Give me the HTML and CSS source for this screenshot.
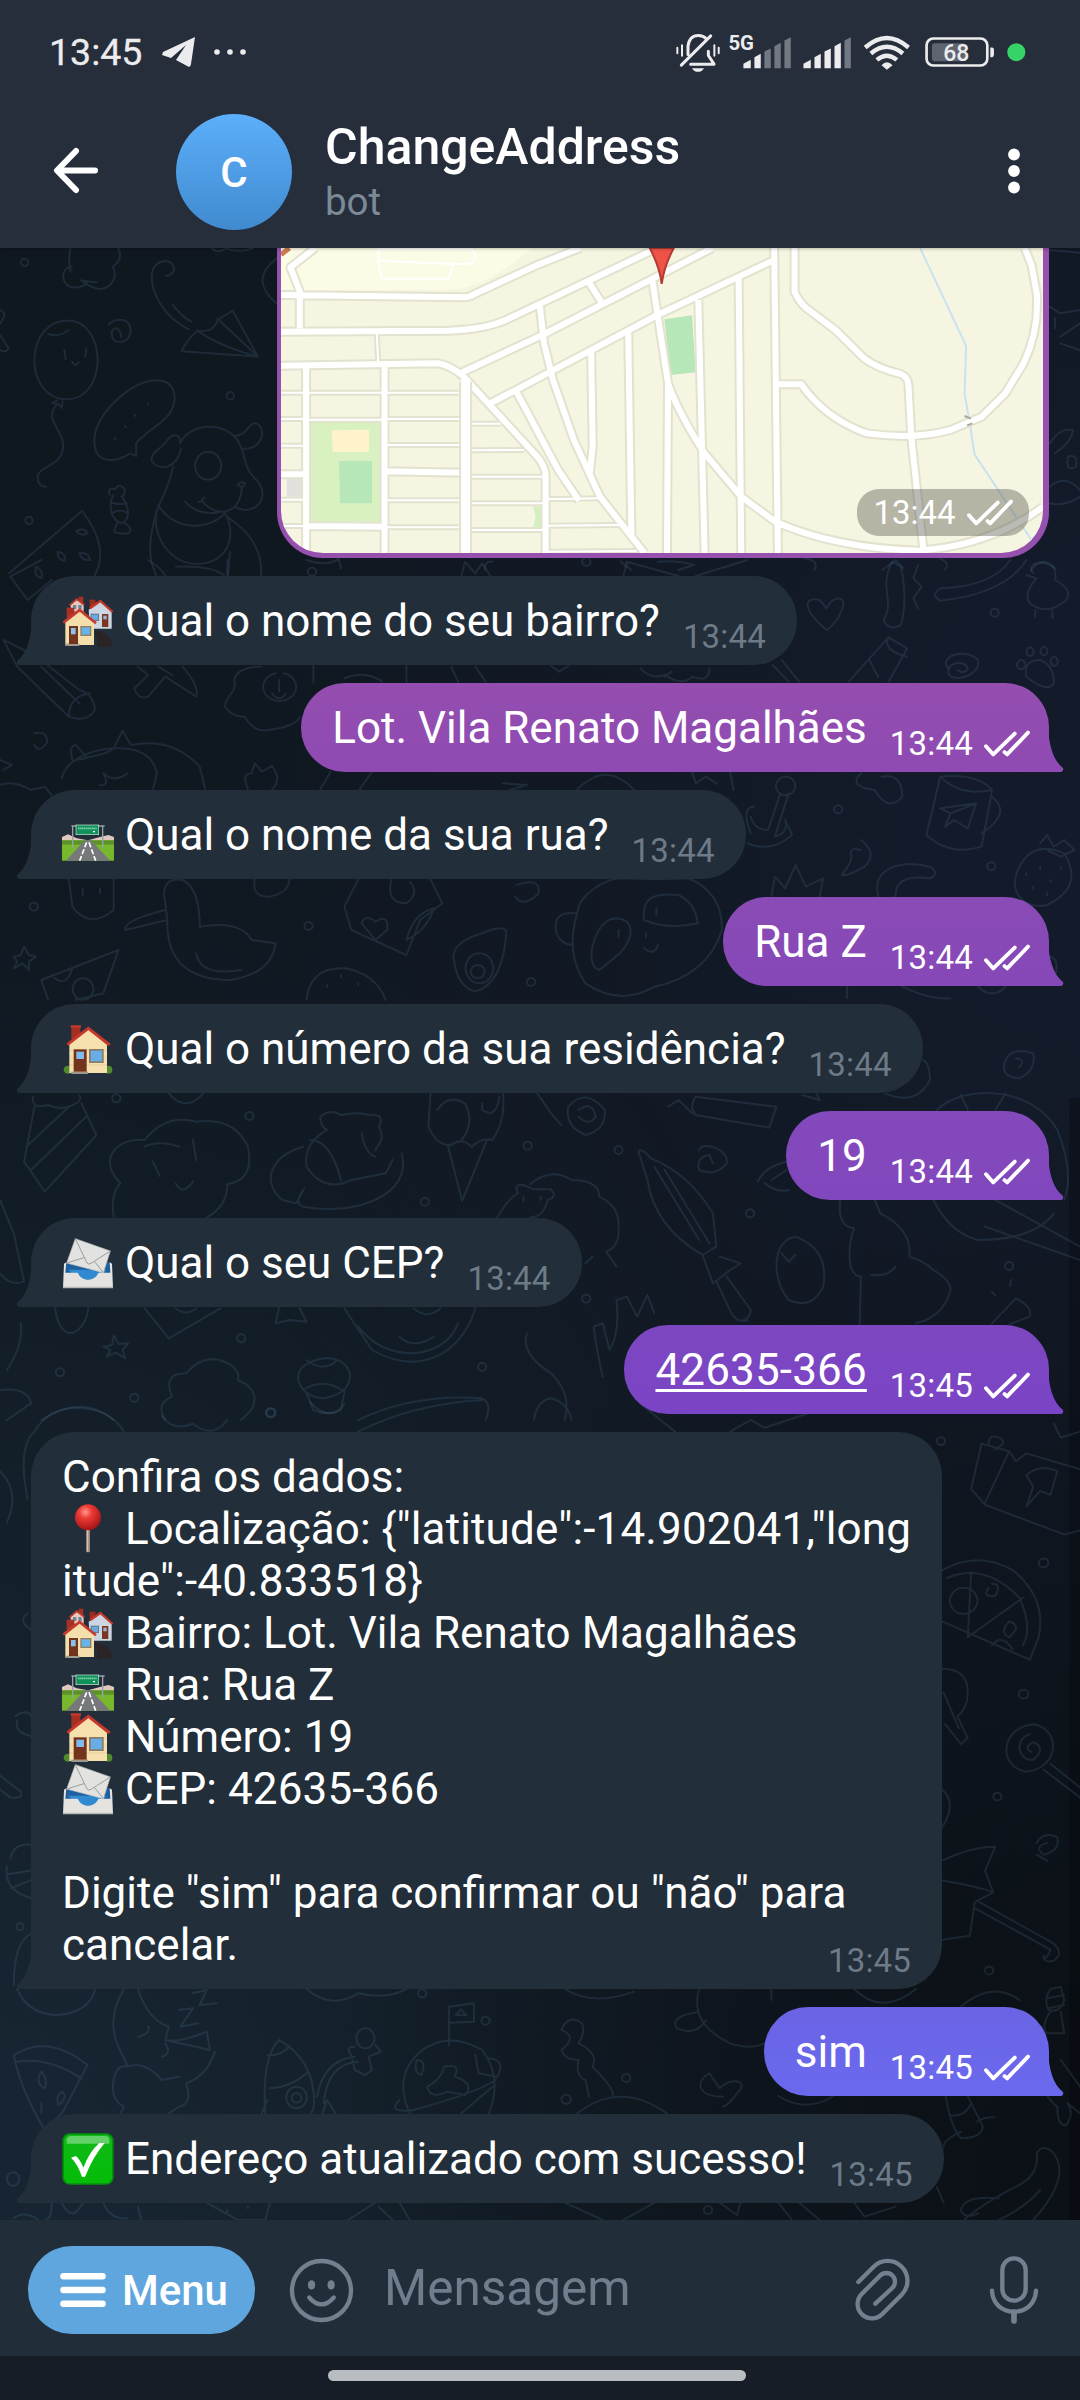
FILE: index.html
```html
<!DOCTYPE html>
<html lang="pt-BR">
<head>
<meta charset="utf-8">
<title>ChangeAddress</title>
<link rel="stylesheet" href="styles.css">
</head>
<body>
<svg class="defs" aria-hidden="true">
  <symbol id="e-houses" viewBox="66 322 156 156">
    <rect x="116" y="327" width="14" height="22" fill="#a33126"/>
    <path d="M92 352 L111 337 L131 352 V372 H92z" fill="#e9c9bd"/>
    <rect x="99" y="352" width="10" height="12" fill="#6c86a0"/><rect x="115" y="352" width="10" height="12" fill="#6c86a0"/>
    <path d="M88 353 L110 334 L133 352" fill="none" stroke="#c0382c" stroke-width="5"/>
    <rect x="149" y="336" width="17" height="26" fill="#9c2c22"/>
    <path d="M146 366 L181 342 L215 372 V423 H150z" fill="#ccd6e2"/>
    <rect x="186" y="379" width="19" height="39" fill="#7b3621"/><rect x="190" y="384" width="10" height="11" fill="#8fb8d8"/>
    <rect x="152" y="378" width="25" height="22" fill="#66788a"/><rect x="155" y="381" width="19" height="16" fill="#66abe0"/>
    <path d="M150 362 L181 340 L218 373" fill="none" stroke="#c6372b" stroke-width="7"/>
    <path d="M166 430 Q208 430 219 477 H171 Q178 452 166 446z" fill="#2b2426"/>
    <rect x="80" y="360" width="23" height="30" fill="#a93025"/>
    <path d="M76 404 L119 370 L162 406 V472 H76z" fill="#f3deac"/>
    <rect x="76" y="468" width="42" height="7" fill="#a29a8d"/>
    <rect x="87" y="415" width="27" height="54" fill="#71331d"/><rect x="93" y="421" width="14" height="19" fill="#8cc0e8"/>
    <rect x="121" y="415" width="33" height="30" fill="#8f8062"/><rect x="125" y="419" width="25" height="22" fill="#68b3ea"/>
    <path d="M70 405 L119 367 L168 407" fill="none" stroke="#c7392c" stroke-width="8"/>
  </symbol>
  <symbol id="e-road" viewBox="66 478 156 156">
    <path d="M66 562 L84 554 L110 566 L144 572 L180 562 L205 556 L222 562 V576 H66z" fill="#e0c8c1"/>
    <rect x="66" y="572" width="156" height="61" fill="#78b82c"/>
    <rect x="66" y="572" width="156" height="13" fill="#5c9328"/>
    <path d="M134 572 H152 L211 633 H78z" fill="#77787b"/>
    <path d="M140 578 L119 633 M147 578 L167 633" stroke="#fff" stroke-width="5" stroke-dasharray="16 6"/>
    <path d="M98 528 V594 M188 528 V594 M94 529 H194" stroke="#93a3aa" stroke-width="4"/>
    <rect x="108" y="526" width="68" height="29" fill="#11915a" stroke="#cfe7db" stroke-width="2"/>
    <path d="M114 536 H170" stroke="#79c9a4" stroke-width="5" stroke-dasharray="5 1"/><path d="M159 546 H165" stroke="#fff" stroke-width="4"/>
  </symbol>
  <symbol id="e-house" viewBox="66 634 156 156">
    <rect x="94" y="642" width="27" height="44" fill="#a52d22"/><rect x="92" y="641" width="31" height="7" fill="#bd3d31"/>
    <ellipse cx="84" cy="774" rx="13" ry="12" fill="#4f8a2e"/><ellipse cx="206" cy="774" rx="11" ry="12" fill="#4f8a2e"/>
    <path d="M88 696 L145 652 L201 698 V784 H88z" fill="#f5e0ae"/>
    <path d="M90 716 H200 M90 738 H200 M90 760 H200" stroke="#e2c88f" stroke-width="2"/>
    <rect x="94" y="780" width="50" height="7" fill="#9f988c"/>
    <rect x="101" y="713" width="39" height="67" fill="#73331d"/><rect x="109" y="720" width="23" height="22" fill="#7dbcec"/>
    <rect x="147" y="712" width="44" height="42" fill="#8a7c66"/><rect x="152" y="717" width="34" height="32" fill="#68aee4"/>
    <path d="M82 699 L145 650 L209 700" fill="none" stroke="#c6382c" stroke-width="9"/>
  </symbol>
  <symbol id="e-mail" viewBox="66 790 156 156">
    <path d="M80 866 H210 L218 898 H70z" fill="#1e5f9e"/>
    <path d="M84 888 L200 888 L172 918 H118z" fill="#2f8ad2"/>
    <path d="M106 795 L211 832 L190 897 L80 868z" fill="#e2e2e0" stroke="#c2c2c0" stroke-width="2"/>
    <path d="M106 795 L141 868 Q146 874 153 869 L211 832 M80 868 L132 852 M190 897 L164 864" fill="none" stroke="#9d9d9b" stroke-width="3"/>
    <path d="M72 870 L69 943 H219 L216 870 L209 866 L211 897 H176 Q165 918 144 918 Q123 918 113 897 H76 L79 866z" fill="#e4e3e0"/>
    <path d="M69 939 H219 V944 H69z" fill="#b9b8b5"/>
  </symbol>
  <symbol id="e-pin" viewBox="66 10 156 156">
    <rect x="138" y="88" width="12" height="70" rx="3" fill="#9b8379"/><rect x="141" y="88" width="4" height="68" fill="#d0bdb4"/>
    <circle cx="144" cy="53" r="39" fill="url(#pinball)"/>
  </symbol>
  <symbol id="e-check" viewBox="0 0 156 156">
    <rect x="1" y="1" width="154" height="154" rx="22" fill="#04920a"/>
    <rect x="6" y="5" width="144" height="146" rx="19" fill="url(#checkfill)"/>
    <path d="M14 22 Q14 9 28 9 H128 Q142 9 142 22 V32 H14z" fill="#fff" opacity=".35"/>
    <path d="M27 74 L42 69 Q56 82 64 104 Q82 56 112 30 H128 Q92 72 69 132 H60 Q48 94 27 74z" fill="#fff"/>
  </symbol>
  <symbol id="ticks" viewBox="494 158 139 80">
    <path d="M500 206 L522 231 L587 168 M556 224 L564 231 L627 165" fill="none" stroke="#fff" stroke-width="11.5" stroke-linecap="round" stroke-linejoin="round"/>
  </symbol>
  <radialGradient id="pinball" cx=".4" cy=".3" r=".7"><stop offset="0" stop-color="#ff9a92"/><stop offset=".35" stop-color="#ee3a35"/><stop offset="1" stop-color="#a41518"/></radialGradient>
  <linearGradient id="checkfill" x1="0" y1="0" x2="0" y2="1"><stop offset="0" stop-color="#10b818"/><stop offset="1" stop-color="#04bd08"/></linearGradient>
</svg>

<header class="top">
  <div class="status">
    <span class="clock">13:45</span>
    <svg class="plane" viewBox="0 0 34 30"><path d="M33 0 L1 15 L0 18 L9 21 L24 8 L14 23 L27 30 Q29 29 29 27z" fill="#ececee"/></svg>
    <svg class="more" viewBox="0 0 32 6"><g fill="#ececee"><circle cx="3" cy="3" r="2.8"/><circle cx="16" cy="3" r="2.8"/><circle cx="29" cy="3" r="2.8"/></g></svg>
    <svg class="indicators" viewBox="45 30 1055 125">
      <g fill="none" stroke="#ececee" stroke-width="9" stroke-linecap="round" stroke-linejoin="round">
        <path d="M84 100 V75 Q88 43 115 43 Q130 43 138 52 M145 90 V103 L162 129 H92 M152 44 L64 132"/>
        <path d="M52 80 V96 M66 72 V104 M163 72 V104 M176 80 V96" stroke-width="6"/>
      </g>
      <path d="M96 141 H132 Q126 152 114 152 Q102 152 96 141z" fill="#ececee"/>
      <text x="205" y="87" class="net">5G</text>
      <g fill="#ececee">
        <path d="M250 141 V128 L272 116 V141z M283 141 V108 L302 98 V141z"/>
        <path d="M430 141 V128 L452 116 V141z M463 141 V108 L482 98 V141z M493 141 V91 L512 82 V141z M523 141 V75 L542 65 V141z"/>
      </g>
      <path d="M313 141 V91 L332 82 V141z M343 141 V75 L362 65 V141z M373 141 V58 L392 48 V141z M553 141 V58 L572 48 V141z" fill="#737983"/>
      <g fill="none" stroke="#ececee" stroke-width="13"><path d="M615 79 Q680 22 745 79 M632 97 Q680 56 728 97 M650 116 Q680 91 710 116"/></g>
      <path d="M664 132 Q680 114 697 132 L680 146z" fill="#ececee"/>
      <rect x="799" y="52" width="182" height="81" rx="20" fill="none" stroke="#ececee" stroke-width="8"/>
      <rect x="815" y="66" width="100" height="54" rx="8" fill="#5f6570"/>
      <path d="M990 79 H996 Q1001 80 1001 86 V101 Q1001 107 996 108 H990z" fill="#ececee"/>
      <text x="888" y="119" text-anchor="middle" class="level">68</text>
      <circle cx="1068" cy="93" r="27" fill="#36d368"/>
    </svg>
  </div>
  <div class="bar">
    <svg class="back" viewBox="0 0 48 48"><path d="M24 4 L5 23.500 L24 43 M5.500 23.500 H43" fill="none" stroke="#fff" stroke-width="6" stroke-linecap="round" stroke-linejoin="round"/></svg>
    <div class="avatar">C</div>
    <div class="who">
      <div class="name">ChangeAddress</div>
      <div class="sub">bot</div>
    </div>
    <svg class="dots" viewBox="0 0 12 46"><g fill="#fff"><circle cx="6" cy="6.500" r="5.900"/><circle cx="6" cy="23" r="5.900"/><circle cx="6" cy="39.500" r="5.900"/></g></svg>
  </div>
</header>

<main class="chat">
  <svg class="wall" viewBox="0 248 1080 1972" aria-hidden="true">
    <g transform="translate(0 240) scale(.33333)">
      <path d="M198 242 C260 238 294 300 293 365 C290 430 255 477 203 478 C140 478 103 425 103 360 C105 290 145 243 198 242 M145 282 Q178 293 205 270 M193 330 L197 357 M259 325 L256 350 M216 365 Q226 384 237 366 M172 480 L157 490 L175 492 L185 504 L188 484 M170 494 C125 545 205 575 187 635 C175 680 110 680 113 715 Q115 740 138 740"/>
      <path d="M327 252 Q350 232 378 243 Q402 262 385 294 Q365 313 343 302 Q325 275 345 265 Q362 265 363 292"/>
      <path d="M212 24 Q203 60 212 95 M216 80 C185 80 180 125 210 140 Q235 148 262 130 M244 120 Q270 145 300 147 C335 145 355 110 338 80 Q370 60 355 24 M244 122 L290 127"/>
      <path d="M498 107 C530 107 530 65 497 63 C450 65 440 120 480 190 Q510 240 566 268 M518 193 Q540 225 573 245 M545 332 Q560 300 592 272 Q640 280 653 240 L698 212 L774 350 L545 334 M592 272 Q660 320 774 350 L653 236"/>
      <path d="M408 610 C450 560 525 540 524 470 C520 410 450 405 380 455 C300 515 270 580 288 635 C310 675 360 660 390 640 L409 648z M443 489 v4 M405 524 v4 M376 558 v4 M345 593 v4"/>
      <path d="M330 765 Q320 740 345 748 Q360 725 374 750 Q376 765 365 770 C390 800 390 840 365 850 C330 840 325 790 340 765 M335 788 Q360 795 380 790 M334 820 Q360 805 384 820 M352 850 Q335 880 350 878 Q370 885 388 878 Q398 862 372 848"/>
      <path d="M540 610 C545 580 515 575 495 610 C470 635 450 640 456 665 C480 695 530 685 543 628 M540 610 C570 545 680 545 715 605 C740 650 730 680 760 710 C810 755 785 810 735 810 Q720 808 708 802 M700 588 C740 590 745 550 765 550 C800 555 795 630 728 626 M624 635 a39 42 0 1 0 1 0 M713 735 Q720 722 736 730 Q730 748 713 735 M725 745 C725 800 670 850 605 783 L612 772 M596 785 L606 783 M555 785 Q590 825 655 818 M520 680 Q505 740 475 800 Q440 900 455 970 L468 1005 M475 795 C520 870 620 875 675 820 C710 880 690 970 590 972 C510 970 455 890 470 810 M680 830 Q790 900 783 1005 M528 980 Q630 975 672 1005 M690 935 L684 1005"/>
      <path d="M27 1000 L246 813 Q330 920 285 1005 M228 874 Q250 860 263 880 Q245 890 228 874 M173 935 Q200 940 193 962 Q172 960 173 935 M238 940 Q265 935 271 960 Q245 962 238 940 M108 980 Q130 990 125 1014 Q100 1010 108 980"/>
      <circle cx="74" cy="67" r="11"/><circle cx="691" cy="467" r="11"/><circle cx="87" cy="841" r="11"/>
      <path d="M0 210 Q25 220 0 250 M0 285 L26 325 Q15 340 0 330 M830 55 Q745 120 830 190 M635 24 Q650 42 680 26 Q720 40 760 24"/>
    </g>
    <g transform="translate(0 560) scale(.6888 .33333)">
      <path d="M15 50 L60 0 M15 50 L40 120 L75 60 M215 0 Q235 25 240 48 M330 0 V48 M445 0 Q470 20 490 0 M670 48 L675 5 L690 40 L700 10 L712 48 M905 48 L910 5 L985 48 M1085 0 L1010 48"/>
      <path d="M1200 210 C1160 140 1170 110 1190 120 L1200 145 C1210 100 1232 110 1222 150 Q1215 190 1200 210 M1295 5 C1275 90 1300 120 1283 180 Q1290 215 1308 195 Q1318 120 1308 20z M1333 15 L1326 55 L1338 80 L1326 115 L1333 145 M1467 0 Q1440 80 1365 85 Q1350 105 1365 122 Q1460 100 1490 0 M1490 45 L1505 55 Q1485 100 1495 130 Q1520 170 1548 120 Q1558 90 1532 60 Q1535 5 1512 5 Q1490 15 1500 40 M1503 150 V172 M1528 150 V175"/>
      <path d="M1232 365 L1290 232 L1317 265 L1290 365 M1262 300 L1275 350 M1290 232 Q1280 270 1317 290 M1378 330 C1360 290 1400 260 1420 300 C1425 340 1390 370 1378 345 C1370 310 1400 295 1405 325 Q1400 345 1390 330 M1490 350 Q1485 300 1510 300 Q1530 315 1530 370 Q1520 400 1490 350 M1482 300 a6 14 0 1 0 1 0 M1495 262 a5 13 0 1 0 1 0 M1515 260 a5 13 0 1 0 1 0 M1530 290 a5 14 0 1 0 1 0 M1122 315 L1145 365 M1135 300 L1160 365"/>
      <path d="M5 240 L25 320 L100 470 Q125 490 138 450 Q135 400 115 390 L50 285z M100 470 Q100 410 130 400 M60 320 L115 430 M200 320 L215 345 L195 385 Q200 420 215 410 L240 350 L285 410 Q290 380 265 320 M230 320 L250 345"/>
      <path d="M340 360 C345 400 325 410 327 440 Q335 470 355 470 Q370 520 390 510 Q430 500 435 470 M340 360 Q345 320 380 320 M400 340 a24 42 0 1 0 12 0 M405 360 V395 M395 400 Q405 430 415 400 M455 318 V368 M500 355 Q530 330 555 365 M590 318 V365 M655 320 L665 365 M690 320 L705 365 M930 325 Q945 360 965 345 Q990 380 1005 350 Q1030 370 1030 325 M965 350 L975 335 M800 318 L812 335 L825 318"/>
      <path d="M90 655 C95 600 130 570 165 565 L178 512 L190 555 Q250 530 290 620 L298 688 M105 600 Q100 555 110 555 L125 590 M110 600 Q160 580 165 565 Q220 560 228 640 L222 688 M145 675 Q160 680 150 640 Q165 670 185 640 M50 520 Q70 510 68 550 Q55 580 50 555 M0 600 L18 615 L5 630 M0 675 Q20 660 45 690 L65 680 L75 705 M360 688 Q350 640 365 640 L370 610 L380 635 L395 618 Q410 660 395 688 M465 688 L480 636 M540 636 L522 688 M730 670 L765 675 L740 690 M838 688 Q880 600 920 688 M1005 636 L1010 670 L1025 650 L1040 670 M1060 636 L1065 690"/>
      <path d="M1140 650 a14 28 0 1 0 1 0 M1133 700 L1115 810 Q1095 810 1090 770 M1145 700 L1125 830 Q1145 820 1140 780 L1150 825 Q1120 880 1085 850 M1095 740 Q1075 740 1090 820 M1250 640 Q1230 680 1270 690 Q1290 760 1310 710 Q1310 640 1280 650 M1365 650 Q1395 710 1440 690 Q1420 640 1365 650 L1345 825 Q1380 890 1425 860 L1440 695 M1440 710 Q1470 760 1425 820 M1365 745 L1417 730 L1405 805 L1385 780 L1372 800 L1380 760z M1380 760 L1417 730 M1250 840 Q1275 880 1255 920 Q1230 950 1222 945 Q1240 900 1235 880 Q1235 860 1250 870"/>
      <path d="M1480 920 C1460 1000 1490 1050 1520 1035 Q1575 980 1545 880 Q1500 840 1480 920 M1510 850 L1520 825 L1530 860 L1545 840 L1560 870 L1540 890 L1520 870 M1490 940 v6 M1510 920 v6 M1500 980 v6 M1525 960 v6 M1540 920 v6 M1520 1000 v6 M1275 1008 C1265 920 1310 900 1350 920 Q1365 940 1350 955 Q1300 940 1300 1008 M1120 1008 L1125 950 L1140 985 L1155 915 L1170 980 L1195 955 L1190 1008 M1230 1280 V1315 M1310 1280 Q1350 1320 1380 1315 M1420 1280 Q1440 1320 1460 1280 M1525 1190 Q1540 1200 1530 1260"/>
      <path d="M100 958 L105 1040 Q130 1110 165 1050 L165 958 M120 985 V1005 M145 985 V1000 M240 1050 Q180 1080 182 1110 L243 1080 M243 1080 L238 1000 Q240 950 265 960 Q290 985 290 1100 Q350 1080 365 1140 L400 1150 Q395 1240 335 1260 Q240 1260 243 1080 M285 1180 Q290 1250 350 1230 M370 958 Q365 1010 390 1010 Q420 1000 420 958 M500 1040 L520 958 M500 1040 L510 1110 L590 1185 L610 1080 L642 1030 L625 958 M568 960 Q560 1030 590 1030 Q610 1000 595 965 M525 1090 Q530 1060 545 1085 Q565 1060 562 1110 L545 1140z M590 1140 Q600 1060 630 1045 Q620 1110 590 1140 M750 975 Q785 950 782 1000 Q760 1045 748 1010"/>
      <path d="M838 1060 C840 1000 880 958 900 955 Q960 960 1000 955 Q1050 1000 1048 1110 C1035 1200 1000 1260 950 1280 Q900 1340 850 1270 Q820 1180 838 1060 Q800 1050 808 1120 Q815 1155 832 1155 M935 1080 C930 1000 960 1000 985 1005 Q1010 1030 1013 1090 Q970 1110 935 1080 M860 1160 C870 1080 890 1060 910 1085 Q925 1120 900 1180 L870 1230 Q855 1220 860 1160 M898 1110 v20 M953 1045 v20 M938 1120 v12 M935 1165 Q950 1190 955 1155"/>
      <path d="M660 1210 Q650 1150 700 1120 Q735 1090 735 1120 Q730 1270 690 1295 Q665 1280 660 1210 M695 1180 a20 45 0 1 0 2 0 M693 1215 a10 20 0 1 0 1 0 M60 1260 L172 1170 L150 1300 L110 1320 M60 1260 L70 1320 M75 1245 Q95 1290 105 1225 M120 1255 a15 32 0 1 0 1 0 M20 1190 L30 1185 L35 1160 L42 1185 L52 1190 L42 1205 L42 1230 L33 1210 L20 1225 L25 1205z M445 1320 Q450 1220 500 1225 Q545 1240 560 1320 M495 1245 v5 M475 1275 v5 M520 1270 v5"/>
      <g><ellipse cx="453" cy="35" rx="6" ry="12"/><ellipse cx="1444" cy="158" rx="6" ry="12"/><ellipse cx="1217" cy="748" rx="6" ry="12"/><ellipse cx="1439" cy="919" rx="6" ry="12"/><ellipse cx="448" cy="1098" rx="6" ry="12"/><ellipse cx="49" cy="1040" rx="6" ry="12"/><ellipse cx="771" cy="1266" rx="6" ry="12"/></g>
    </g>
    <g transform="translate(0 980) scale(.6888 .33333)">
      <path d="M48 350 Q45 390 70 375 Q90 395 110 370 Q120 360 115 345 M50 380 L35 545 L65 635 L140 465 L118 370 M38 500 L100 380 M45 570 L125 410 M245 340 Q270 400 295 340"/>
      <path d="M165 712 Q160 640 175 610 C140 540 170 470 210 480 Q240 400 285 425 Q340 410 360 500 Q370 600 330 612 Q330 680 300 712 M210 500 Q230 480 260 500 M280 480 L285 540 M222 545 L232 588 M255 610 Q265 650 280 605"/>
      <path d="M465 410 Q480 385 495 405 Q520 395 535 405 Q560 400 550 440 C560 480 550 490 545 510 M465 410 Q465 440 475 450 Q440 490 445 560 Q470 640 510 600 L560 580 L570 540 M440 500 C390 530 380 610 410 660 L430 670 L442 625 Q425 670 440 680 C520 710 600 640 583 520 M525 460 Q530 520 545 530 M450 480 Q480 480 495 600"/>
      <path d="M625 340 L622 440 Q635 500 655 495 Q670 470 685 500 Q700 470 715 480 Q735 420 730 340 M650 495 L671 663 L707 480 M635 390 Q650 340 675 370 Q690 430 670 480 M700 370 V390 Q720 420 725 350 M780 340 L800 400 L815 435 M825 380 Q850 320 878 390 Q880 450 850 465 Q820 440 825 380 M840 390 Q860 360 865 410 Q855 440 840 410 M1010 350 L1127 380 L1117 443 L1010 405 Q1000 380 1010 350 M970 380 L985 360 L1005 400 M1165 345 L1190 360 L1185 340"/>
      <path d="M722 712 Q740 650 752 640 Q745 610 760 615 L775 628 L800 628 Q810 650 795 660 Q790 710 770 712 M770 612 Q800 560 830 600 Q870 600 870 650 Q900 680 898 740 Q900 800 880 815 L895 860 M850 850 L860 830 M760 650 v15 M785 650 v10"/>
      <path d="M927 515 Q930 500 945 535 Q1000 580 1035 700 L1040 800 L1020 825 Q950 740 940 600z M950 560 L1015 780 M965 570 L1030 790 M1020 825 L1035 910 L1060 870 L1075 850 L1045 830 M1040 905 L1062 1000 Q1070 1030 1085 1020 M1055 890 L1090 990 Q1088 1015 1080 1020 M1155 770 C1120 780 1120 900 1145 960 Q1180 990 1195 920 Q1205 810 1155 770 M1135 820 L1145 845 L1155 825"/>
      <path d="M1015 510 C1020 480 1060 510 1055 550 Q1040 590 1015 570 Q1010 530 1030 525 L1035 550 M1100 605 Q1110 560 1142 545 M1120 600 L1142 570 M1110 610 Q1130 640 1145 630 M1460 240 Q1470 200 1500 220 Q1505 270 1480 295 Q1450 290 1460 240 M1475 235 Q1490 240 1480 260 M1285 340 Q1330 380 1350 300 Q1350 250 1340 240"/>
      <path d="M1360 390 C1400 310 1500 320 1535 450 Q1560 580 1545 660 M1355 660 Q1380 760 1420 780 Q1500 780 1530 700 M1395 345 L1405 390 M1460 340 L1445 390 M1445 660 L1568 800 M1430 740 L1568 840 M1220 660 Q1215 740 1240 745 Q1230 800 1235 860 Q1240 890 1250 890 L1248 1033 M1270 660 L1278 700 Q1325 750 1320 830 Q1340 840 1355 870 Q1380 900 1380 930 Q1370 1010 1330 1030 M1265 885 Q1290 890 1300 860"/>
      <path d="M875 1190 Q865 1100 862 1040 L875 1030 L885 1110 Q900 1060 895 960 L910 950 L925 1010 L940 945 L950 1000 M500 985 L540 1110 Q600 1180 650 1110 Q680 1060 690 985 M520 1040 Q550 1120 600 1120 Q650 1110 665 1030 M580 1070 Q600 1110 630 1070 M600 985 Q620 1020 640 985 M80 985 Q85 1060 105 1060 Q125 1040 128 985 M210 985 L245 1075 L320 985 M255 985 Q270 1010 285 985 M400 1030 L405 985 M400 1030 L420 1020 L445 1025 L435 985 M150 1100 L163 1095 L165 1065 L172 1092 L186 1090 L178 1110 L182 1135 L168 1118 L155 1130 L160 1110z"/>
      <path d="M240 1320 Q225 1270 250 1250 Q235 1180 270 1180 Q300 1110 335 1155 Q350 1180 345 1200 Q380 1230 365 1290 L350 1320 M470 1135 Q430 1150 433 1200 Q440 1250 470 1255 Q510 1240 508 1180 Q500 1130 470 1135 M445 1140 Q470 1180 490 1140 M440 1230 Q470 1190 500 1235 L495 1290 Q475 1310 455 1290 L445 1240 M520 1320 Q600 1240 700 1255 Q715 1270 705 1320 M765 1060 Q755 1120 800 1180 Q830 1240 820 1320 M775 1320 Q780 1260 800 1255 Q825 1270 830 1320 M30 1030 Q35 1090 10 1170 M0 1230 Q40 1220 45 1270 L10 1320 M60 1320 Q120 1240 165 1320 M0 660 L20 760 L35 905 Q15 920 0 880 M1440 1030 L1475 955 Q1500 980 1495 1010 L1465 1033 M1440 935 l5 12 M1468 900 l-2 18"/>
      <g><ellipse cx="169" cy="355" rx="6" ry="12"/><ellipse cx="362" cy="408" rx="6" ry="12"/><ellipse cx="766" cy="497" rx="6" ry="12"/><ellipse cx="898" cy="510" rx="6" ry="12"/><ellipse cx="617" cy="665" rx="6" ry="12"/><ellipse cx="1089" cy="700" rx="6" ry="12"/><ellipse cx="851" cy="956" rx="6" ry="12"/><ellipse cx="350" cy="1075" rx="6" ry="12"/><ellipse cx="87" cy="1177" rx="6" ry="12"/><ellipse cx="700" cy="1161" rx="6" ry="12"/><ellipse cx="195" cy="1253" rx="6" ry="12"/><ellipse cx="393" cy="1298" rx="6" ry="12"/><ellipse cx="1465" cy="858" rx="6" ry="12"/></g>
    </g>
    <g transform="translate(0 1400) scale(.6888 .3954)">
      <path d="M40 250 Q25 120 50 80 Q70 20 110 20 Q160 20 180 80 M235 40 Q250 80 280 60 Q310 100 330 50 M520 80 Q600 10 700 0 M450 5 Q480 60 500 10 M930 10 L980 80 M1060 80 L1090 50 L1110 70 L1180 30 M1530 60 L1540 95 L1568 80"/>
      <path d="M1425 110 L1410 225 L1430 265 L1545 340 L1568 330 M1425 110 L1465 130 L1475 155 L1490 135 L1568 175 M1465 130 L1430 260 M1435 115 Q1435 85 1450 95 Q1465 105 1445 125 M1490 190 Q1510 160 1535 180 L1525 240 L1510 230 L1490 270 L1500 220z"/>
      <path d="M1368 430 Q1420 380 1470 430 Q1520 500 1508 600 L1495 657 L1368 560 M1375 450 Q1430 410 1480 500 Q1500 580 1485 620 M1410 435 L1405 600 L1485 500 M1398 475 a20 33 0 1 0 2 0 M1440 465 Q1455 465 1445 495 Q1425 500 1435 475 M1465 560 Q1485 570 1465 600 Q1450 590 1465 560 M1440 620 Q1455 590 1470 630"/>
      <path d="M1368 680 Q1405 680 1405 740 Q1405 780 1390 800 L1405 855 L1395 870 L1372 820 M1370 740 L1392 830 M1368 985 Q1390 1020 1368 1080"/>
      <path d="M1500 820 C1450 830 1450 930 1490 940 C1540 930 1540 830 1500 820 M1495 845 C1470 860 1480 915 1500 910 Q1520 880 1500 865 Q1485 880 1497 890 M1525 920 L1568 980 M1515 935 L1568 1005 M1505 1120 Q1515 1090 1535 1105 Q1540 1140 1515 1150 Q1500 1130 1520 1120 M1505 1150 L1520 1165"/>
      <path d="M1368 1165 Q1410 1130 1445 1130 L1430 1190 L1442 1245 L1415 1270 L1408 1355 L1368 1365 M1368 1215 Q1420 1230 1442 1245 M1415 1285 L1525 1390 Q1520 1415 1515 1410 M1422 1270 L1530 1375 Q1545 1400 1530 1418 Q1515 1425 1515 1405"/>
      <path d="M0 180 Q30 230 10 310 M40 540 Q25 560 45 580 M22 800 Q40 780 45 800 M25 810 Q20 840 45 850 M0 950 L30 990 Q35 1010 15 1005 L0 985 M15 1160 Q20 1120 45 1125 M10 1180 Q5 1240 45 1260 M10 1200 L45 1190 M15 1235 L45 1215 M20 1480 Q20 1370 45 1350"/>
      <ellipse cx="393" cy="32" rx="7" ry="12"/><ellipse cx="1366" cy="104" rx="6" ry="10"/><ellipse cx="1515" cy="412" rx="7" ry="11"/><ellipse cx="1486" cy="744" rx="7" ry="11"/><ellipse cx="1448" cy="1003" rx="6" ry="10"/><ellipse cx="1436" cy="1443" rx="6" ry="10"/><ellipse cx="29" cy="1332" rx="5" ry="9"/>
    </g>
    <g transform="translate(0 1980) scale(.6888 .33333)">
      <path d="M25 27 Q40 100 80 105 Q130 100 138 27 M180 27 C150 130 170 200 185 255 M200 27 Q215 120 245 140 L240 180 L305 210 L300 155 Q260 190 240 180 M200 170 Q220 160 215 140 M235 230 Q250 220 240 190 M312 215 Q300 290 270 310 Q280 370 260 380 L245 400 M165 300 Q170 250 185 260 Q210 240 235 300 L260 290 M165 300 Q160 360 180 380 L175 400 M280 40 L300 30 L290 75 L315 70 M260 90 L280 85 L262 140 L288 130"/>
      <path d="M20 225 Q70 160 127 255 L90 400 L65 450 Q30 330 20 225 M25 245 Q70 230 118 295 M60 275 Q70 295 65 325 Q50 310 60 275 M90 335 Q100 350 85 375 Q80 350 90 335 M60 370 v30"/>
      <path d="M385 400 Q380 230 405 180 Q440 220 452 300 Q460 370 452 400 M388 225 Q405 230 420 200 M392 325 Q425 320 447 275 M430 320 a15 32 0 1 0 1 0 M430 340 a7 14 0 1 0 1 0 M388 360 L380 400 M460 350 Q470 240 515 230 M470 370 Q475 250 520 245 M530 145 a13 30 0 1 0 1 0 M515 200 Q500 200 510 225 L515 270 L530 285 L540 270 L535 230 L553 215 L545 195 M468 400 L475 360 L487 400"/>
      <path d="M595 400 Q570 290 610 215 Q650 150 700 210 Q730 290 710 400 M652 195 V80 L688 70 V125 L652 128 M662 105 L669 88 L677 105z M605 240 Q620 240 612 285 Q600 280 605 240 M645 260 Q670 250 660 290 Q690 310 675 345 L650 335 Q625 360 620 320 Q640 300 645 260 M690 225 L695 280 L722 290 Q735 240 710 235 M580 360 Q560 400 600 390 Q690 340 720 300 M670 400 L715 320"/>
      <path d="M815 150 Q825 100 845 130 Q850 160 840 190 Q870 220 860 260 Q890 320 890 345 M815 150 Q840 170 815 210 Q820 240 840 240 Q835 290 850 300 L855 350 M838 400 Q900 300 968 400 M1015 27 Q1000 130 1060 190 Q1090 210 1110 190 M1015 95 Q970 110 983 145 Q1010 170 1025 120 M1120 27 V60 M1050 350 C1010 350 1010 300 1030 280 L1045 325 C1060 290 1090 300 1070 340 Q1060 370 1050 380 M1240 27 Q1280 110 1330 27 M1525 27 Q1515 60 1522 90 Q1540 100 1545 60 L1540 20z M1520 55 L1545 45 M1522 85 L1545 75 M1525 95 Q1510 140 1520 160 L1545 160 L1540 95 M445 27 Q480 90 520 40 Q560 60 590 27 M820 27 Q860 80 920 35 M1395 80 Q1440 0 1480 60"/>
      <path d="M1373 348 Q1380 440 1395 475 Q1425 475 1427 440 L1405 348 M1378 405 Q1400 415 1410 370 M1418 425 Q1430 410 1443 412 M1395 455 Q1370 480 1370 500 M1500 270 Q1520 360 1535 380 Q1535 440 1548 435 Q1560 400 1550 370 L1568 400 M1568 320 L1540 240 M1130 348 Q1170 400 1210 348"/>
      <path d="M1505 520 C1515 480 1540 520 1538 580 Q1535 640 1500 720 M1505 520 Q1510 590 1470 625 Q1420 680 1400 720 M1450 655 Q1400 645 1395 690 Q1400 720 1420 700 M1360 620 L1370 668 M1510 630 Q1490 680 1450 720"/>
      <path d="M20 715 Q35 690 55 718 M75 668 Q75 720 65 720 M150 668 Q160 720 185 715 M90 670 Q105 730 120 670 M200 680 L205 720 M300 668 L345 720 L385 720 L392 668 M330 690 v5 M360 680 v5 M505 720 L545 668 M580 668 L595 720 M550 680 L570 720 M820 668 L875 720 M905 720 L950 668 M1045 668 L1070 705 L1075 668 M1130 668 L1150 720 M1160 668 L1190 720 M1240 668 L1255 710 L1300 680"/>
      <ellipse cx="613" cy="40" rx="6" ry="12"/><ellipse cx="705" cy="122" rx="6" ry="12"/><ellipse cx="909" cy="294" rx="6" ry="12"/><ellipse cx="822" cy="358" rx="7" ry="13"/><ellipse cx="1028" cy="690" rx="6" ry="12"/><ellipse cx="19" cy="597" rx="9" ry="20"/>
    </g>
    <g transform="translate(260 240) scale(.523 .33333)">
      <path d="M1510 30 L1568 38 M1510 200 L1530 220 L1568 210 M1520 235 v30 M1530 290 L1568 250 M1530 310 L1568 330 M1510 610 Q1530 560 1555 570 Q1550 610 1520 640 M1545 650 Q1565 640 1560 680 Q1540 700 1545 650 M1510 740 Q1540 700 1568 750 M1510 790 Q1540 800 1568 770 M150 955 L155 985 M430 990 Q430 960 445 965 M620 955 a8 12 0 1 0 8 0 M690 965 L710 990 M760 965 Q800 960 830 975 L800 990 M1040 955 Q1070 960 1060 990 M1190 990 L1215 960 L1230 985 M1300 955 Q1320 970 1310 988 M1475 990 Q1490 950 1520 985"/>
    </g>
  </svg>

  <section class="msg out place">
    <svg class="map" viewBox="40 24 1457 915" preserveAspectRatio="none">
      <defs><g id="roads">
        <path d="M105 24 L58 82 L76 155 V265 M40 165 L390 172 Q400 172 410 162 L530 75 L612 24 M40 275 L360 272 Q430 268 470 240 L760 24 M385 398 L540 285 L865 24 M438 492 L760 225 L983 60 M40 377 L340 370 Q362 375 388 408 L530 650 Q546 680 546 710 V939 M88 377 V939 M238 372 V939 M535 200 L543 310 L560 420 L600 600 L650 770 L735 939 M490 455 L570 690 L610 782 M633 335 L636 620 L630 705 M704 280 L710 890 M628 125 L652 185 M750 120 L780 430 L778 939 M780 430 Q800 520 850 640 L920 770 L985 845 Q1100 925 1260 932 Q1400 915 1497 800 M838 180 L850 939 M915 110 L920 939 M983 24 L990 939 M1022 24 V155 Q1030 185 1045 205 L1100 270 L1155 355 Q1180 385 1225 402 Q1240 412 1240 440 L1245 590 L1268 925 M990 433 H1035 Q1080 535 1160 580 Q1250 600 1320 570 L1380 530 L1425 460 L1460 370 Q1490 270 1485 160 L1475 75 L1462 24 M40 703 H88 M238 694 L393 698 M88 858 L238 860"/>
      </g><g id="lanes">
        <path d="M223 280 L226 370 M40 458 H385 M40 537 H88 M238 537 H385 M88 539 H238 M40 617 H88 M238 615 H385 M40 779 H88 M238 781 H385 M40 858 H88 M238 862 H385 M403 551 H460 M403 631 L505 630 M403 710 H545 M403 790 H545 M403 870 H545 M546 778 L650 775 M546 857 L690 855 M546 935 L720 933"/>
      </g></defs>
      <rect x="40" y="24" width="1457" height="915" fill="#f6f5e1"/>
      <path d="M40 24 H520 L475 80 Q430 130 380 148 L40 152z" fill="#fcfbe6"/>
      <path d="M226 24 V62 L232 112 Q235 116 245 116 H360 L370 72 H400 Q412 65 412 45 L405 28 H226 M226 62 L370 72" class="court"/>
      <path d="M97 543 H232 V845 H97z" fill="#d9f1c1"/>
      <path d="M137 571 L208 569 V636 H139z" fill="#fff3cc"/>
      <path d="M151 663 H214 V790 H153z" fill="#b7e6b9"/>
      <path d="M522 800 H537 V860 H523 L527 830z" fill="#d2efbd"/>
      <rect x="51" y="714" width="31" height="56" fill="#e3dfdd"/>
      <path d="M773 238 L826 226 L833 397 L785 405z" fill="#b7e6b9"/>
      <path d="M1262 24 L1350 318 L1347 460 L1357 550 L1366 643 L1475 900" class="river"/>
      <use href="#roads" class="casing"/><use href="#lanes" class="lane-casing"/>
      <use href="#lanes" class="lane"/><use href="#roads" class="road"/>
      <path d="M393 425 V939" class="avenue-casing"/><path d="M393 415 V939" class="avenue"/>
      <path d="M1347 528 l12 8 M1352 556 l10 -6" class="bridge"/>
      <path d="M40 44 L56 24" class="highway"/>
      <path d="M745 24 H791 Q772 80 768 132 Q764 80 745 24z" fill="#ef5347" stroke="#b23a31" stroke-width="2"/>
    </svg>
    <div class="stamp"><span>13:44</span><svg class="ticks"><use href="#ticks"/></svg></div>
  </section>

  <section class="msg in"><p class="text"><svg class="emo"><use href="#e-houses"/></svg> Qual o nome do seu bairro?</p><span class="time">13:44</span></section>
  <section class="msg out c1"><p class="text">Lot. Vila Renato Magalhães</p><span class="time">13:44<svg class="ticks"><use href="#ticks"/></svg></span></section>
  <section class="msg in"><p class="text"><svg class="emo"><use href="#e-road"/></svg> Qual o nome da sua rua?</p><span class="time">13:44</span></section>
  <section class="msg out c2"><p class="text">Rua Z</p><span class="time">13:44<svg class="ticks"><use href="#ticks"/></svg></span></section>
  <section class="msg in"><p class="text"><svg class="emo"><use href="#e-house"/></svg> Qual o número da sua residência?</p><span class="time">13:44</span></section>
  <section class="msg out c3"><p class="text">19</p><span class="time">13:44<svg class="ticks"><use href="#ticks"/></svg></span></section>
  <section class="msg in"><p class="text"><svg class="emo"><use href="#e-mail"/></svg> Qual o seu CEP?</p><span class="time">13:44</span></section>
  <section class="msg out c4"><p class="text"><span class="link num">42635-366</span></p><span class="time">13:45<svg class="ticks"><use href="#ticks"/></svg></span></section>
  <section class="msg in long"><p class="text">Confira os dados:<br><svg class="emo"><use href="#e-pin"/></svg> Localização: <span class="num">{"latitude":-14.902041,"long<br>itude":-40.833518}</span><br><svg class="emo"><use href="#e-houses"/></svg> Bairro: Lot. Vila Renato Magalhães<br><svg class="emo"><use href="#e-road"/></svg> Rua: Rua Z<br><svg class="emo"><use href="#e-house"/></svg> Número: <span class="num">19</span><br><svg class="emo"><use href="#e-mail"/></svg> CEP: <span class="num">42635-366</span><br><br>Digite "sim" para confirmar ou "não" para<br>cancelar.</p><span class="time">13:45</span></section>
  <section class="msg out c5"><p class="text">sim</p><span class="time">13:45<svg class="ticks"><use href="#ticks"/></svg></span></section>
  <section class="msg in"><p class="text"><svg class="emo"><use href="#e-check"/></svg> Endereço atualizado com sucesso!</p><span class="time">13:45</span></section>
</main>

<footer class="compose">
  <div class="menu"><svg class="burger" viewBox="0 0 46 36"><path d="M3.500 4.300 H42.500 M3.500 18 H42.500 M3.500 31.700 H42.500" stroke="#fff" stroke-width="6.500" stroke-linecap="round"/></svg><span>Menu</span></div>
  <svg class="smile" viewBox="865 82 196 196"><g fill="none" stroke="#74808f" stroke-width="13" stroke-linecap="round"><circle cx="963" cy="180" r="89"/><path d="M926 201 Q963 243 1000 201"/></g><g fill="#74808f"><ellipse cx="933" cy="163" rx="11" ry="14"/><ellipse cx="992" cy="163" rx="11" ry="14"/></g></svg>
  <span class="hint">Mensagem</span>
  <svg class="clip" viewBox="100 768 174 204"><path d="M116 846 L162 800 A59 59 0 0 1 246 884 L188 942 A43 43 0 0 1 126 882 L181.600 826.600 A26 26 0 0 1 218.400 863.400 L167 911" fill="none" stroke="#74808f" stroke-width="13" stroke-linecap="round"/></svg>
  <svg class="mic" viewBox="504 762 156 216"><g fill="none" stroke="#74808f" stroke-width="13" stroke-linecap="round"><rect x="547" y="775" width="70" height="127" rx="35"/><path d="M516 872 C518 912 546 935 582 935 C618 935 646 912 648 872"/><path d="M582 936 V963" stroke-width="17"/></g></svg>
</footer>
<div class="nav"><div class="pill"></div></div>
</body>
</html>
```
FILE: styles.css
```css
* { box-sizing: border-box; }
body { margin: 0; width: 1080px; height: 2400px; overflow: hidden; display: flex; flex-direction: column; background: #161d27; font-family: Roboto, sans-serif; color: #fff; }
svg { display: block; flex: none; }
.defs { position: absolute; width: 0; height: 0; }

.top { height: 248px; background: #262d3b; flex: none; position: relative; z-index: 2; box-shadow: 0 1px 3px rgba(0, 0, 0, .25); }
.status { height: 96px; padding: 7px 53px 0 49px; display: flex; align-items: center; color: #ececee; }
.clock { font-size: 37.5px; line-height: 44px; width: 113px; -webkit-text-stroke: .3px #ececee; }
.plane { width: 34px; height: 30px; margin-right: 18px; }
.more { width: 32px; height: 6px; }
.indicators { width: 352px; height: 42px; margin-left: auto; }
.net { font: 700 61px Roboto, sans-serif; fill: #ececee; }
.level { font: 500 69px Roboto, sans-serif; fill: #ececee; }
.bar { height: 152px; padding: 0 60px 2px 52px; display: flex; align-items: center; }
.back { width: 48px; height: 48px; }
.avatar { width: 116px; height: 116px; margin-left: 76px; margin-top: 2px; border-radius: 50%; background: linear-gradient(#5caffa, #408acf); display: flex; align-items: center; justify-content: center; font-size: 42px; font-weight: 500; }
.who { margin-left: 33px; flex: 1; }
.name { font-size: 50px; font-weight: 500; line-height: 58px; }
.sub { font-size: 38.5px; line-height: 46px; color: #7a8a97; margin-top: 3px; }
.dots { width: 12px; height: 46px; }

.chat { height: 1972px; flex: none; position: relative; overflow: hidden; display: flex; flex-direction: column; justify-content: flex-end; gap: 18px; padding: 0 31px 17px;
  background:
    linear-gradient(90deg, transparent 1069px, rgba(4, 6, 10, .35) 1069px) 0 850px no-repeat,
    radial-gradient(ellipse 760px 1000px at 100% 97%, #0c1117 10%, transparent 100%),
    radial-gradient(ellipse 950px 1500px at 0 100%, #172532 10%, transparent 100%),
    radial-gradient(ellipse 900px 1200px at 100% 28%, #131a29 20%, transparent 100%),
    #0f171f; }
.wall { position: absolute; inset: 0; width: 1080px; height: 1972px; }
.wall path, .wall circle, .wall ellipse { fill: none; stroke: rgba(96, 134, 164, .18); stroke-width: 2px; stroke-linecap: round; stroke-linejoin: round; vector-effect: non-scaling-stroke; }

.msg { position: relative; display: flex; align-items: flex-end; gap: 23px; min-height: 89px; padding: 19px 31px 18px; border-radius: 44px; background: linear-gradient(var(--a), var(--b)); }
.msg::after { content: ""; position: absolute; bottom: 0; width: 16px; height: 46px; background: var(--b); }
.in { --a: #222e39; --b: #222e39; align-self: flex-start; border-bottom-left-radius: 0; }
.in::after { left: -15px; clip-path: path("M16 0 C15 20 11 34 1 42 Q0 45 3 46 H16z"); }
.out { align-self: flex-end; border-bottom-right-radius: 0; padding-right: 19px; }
.out::after { right: -15px; clip-path: path("M0 0 C1 20 5 34 15 42 Q16 45 13 46 H0z"); }
.c1 { --a: #944eaf; --b: #8f4ab3; }
.c2 { --a: #8a4bb6; --b: #8648b8; }
.c3 { --a: #8449bb; --b: #8147bd; }
.c4 { --a: #7d47c1; --b: #7a44c6; }
.c5 { --a: #6b64e5; --b: #6a69ee; }
.text { margin: 0; font-size: 44px; line-height: 52px; white-space: nowrap; }
.num { letter-spacing: .15px; }
.emo { display: inline-block; width: 52px; height: 52px; vertical-align: bottom; }
.time { display: flex; align-items: center; gap: 11px; font-size: 33px; letter-spacing: .2px; line-height: 39px; margin-bottom: -9px; }
.in .time { color: #6d7b88; }
.ticks { width: 46px; height: 27px; }
.link { text-decoration: underline; text-decoration-thickness: 3px; text-underline-offset: 4px; text-decoration-skip-ink: none; }
.long { display: grid; width: 911px; }
.long > * { grid-area: 1 / 1; }
.long .time { align-self: end; justify-self: end; }

.place { --a: #9650ae; --b: #9650ae; width: 772px; height: 310px; padding: 0 6px 5px 4px; background: #9650ae; border-radius: 0 0 46px 46px; }
.place::after { display: none; }
.map { width: 762px; height: 305px; border-radius: 0 0 42px 42px; }
.map path { vector-effect: non-scaling-stroke; }
.casing, .lane-casing, .lane, .road, .court, .river, .avenue, .avenue-casing, .bridge, .highway { fill: none; stroke-linejoin: round; }
.casing { stroke: #e2e2cf; stroke-width: 10px; }
.road { stroke: #fff; stroke-width: 6px; }
.lane-casing { stroke: #e2e2cf; stroke-width: 6px; }
.lane { stroke: #fff; stroke-width: 2px; }
.court { stroke: #fff; stroke-width: 2px; }
.river { stroke: #c9e3ee; stroke-width: 2px; }
.avenue-casing { stroke: #e2e2cf; stroke-width: 13px; }
.avenue { stroke: #fff; stroke-width: 9px; }
.bridge { stroke: #a9a99b; stroke-width: 2px; }
.highway { stroke: #cb7c50; stroke-width: 5px; }
.stamp { position: absolute; right: 20px; bottom: 22px; width: 172px; height: 47px; border-radius: 22px; background: rgba(90, 90, 84, .42); display: flex; align-items: center; justify-content: center; gap: 11px; font-size: 33px; line-height: 47px; }

.compose { height: 136px; flex: none; background: #222d3a; display: flex; align-items: center; padding: 4px 40px 0 28px; }
.menu { width: 227px; height: 88px; border-radius: 44px; background: #5fa6de; display: flex; align-items: center; padding-left: 32px; gap: 16px; font-size: 42px; font-weight: 500; }
.burger { width: 46px; height: 36px; }
.smile { width: 65px; height: 65px; margin-left: 34px; }
.hint { margin: -4px 0 0 30px; flex: 1; font-size: 49.5px; color: #6f7d8c; }
.clip { width: 58px; height: 68px; }
.mic { width: 52px; height: 72px; margin-left: 77px; }
.nav { height: 44px; flex: none; background: #161d27; padding: 14px 6px 0 0; }
.pill { width: 418px; height: 11px; margin: 0 auto; border-radius: 6px; background: #b9bcc0; }
```
